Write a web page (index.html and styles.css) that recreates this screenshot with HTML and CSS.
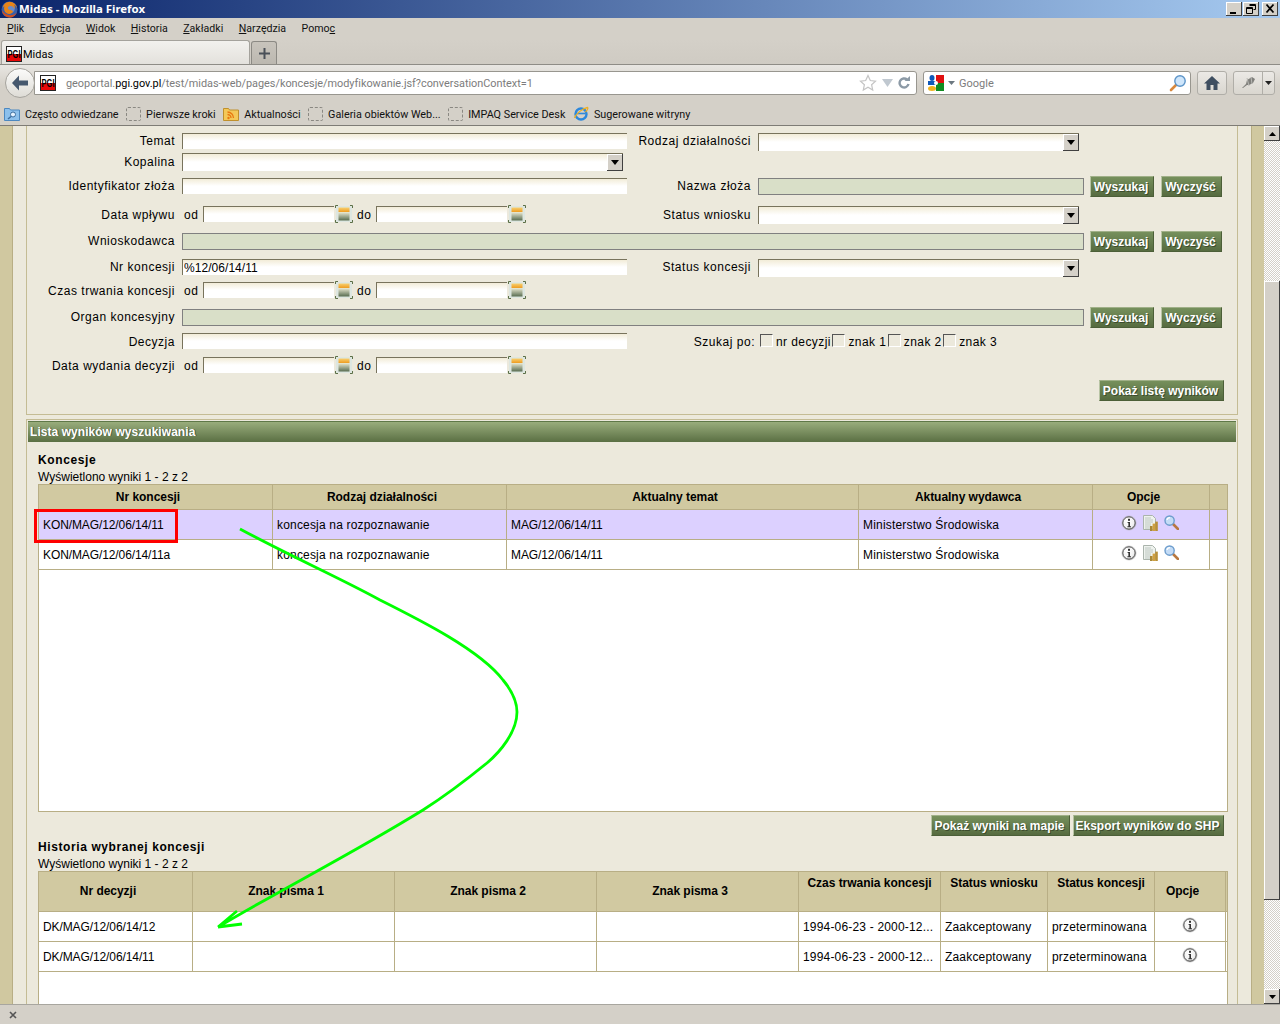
FILE: index.html
```html
<!DOCTYPE html>
<html lang="pl">
<head>
<meta charset="utf-8">
<title>Midas - Mozilla Firefox</title>
<link rel="stylesheet" href="styles.css">
</head>
<body>
<svg class="defs" aria-hidden="true">
  <defs>
    <linearGradient id="gCalTop" x1="0" y1="0" x2="0" y2="1"><stop offset="0" stop-color="#f8d070"/><stop offset="1" stop-color="#ee9c20"/></linearGradient>
    <linearGradient id="gCal" x1="0" y1="0" x2="0" y2="1"><stop offset="0" stop-color="#ecebd4"/><stop offset="1" stop-color="#586c50"/></linearGradient>
    <radialGradient id="gInfo" cx=".4" cy=".35" r=".75"><stop offset="0" stop-color="#fff"/><stop offset=".7" stop-color="#f0f0f0"/><stop offset="1" stop-color="#a8a8a8"/></radialGradient>
    <symbol id="i-info" viewBox="0 0 16 16">
      <circle cx="8" cy="8" r="7.6" fill="#b4b4b4" opacity=".55"/>
      <circle cx="8" cy="8" r="6.2" fill="url(#gInfo)" stroke="#4c4c4c" stroke-width="1"/>
      <rect x="7" y="3.8" width="2" height="2" fill="#333"/>
      <path d="M6.6 7h2.4v4.2h1v1H6.4v-1h1V8h-.8z" fill="#333"/>
    </symbol>
    <symbol id="i-report" viewBox="0 0 15 16">
      <path d="M.5.5h9l3 3v11H.5z" fill="#eef2ee" stroke="#aab4ac"/>
      <path d="M2.500 3h6M2.500 5h8M2.500 7h8M2.500 9h5M2.500 11h5M2.500 13h5" stroke="#8c9c94" stroke-dasharray="1 1"/>
      <rect x="7" y="11" width="2.600" height="5" fill="#a88838"/>
      <rect x="9.600" y="8.600" width="2.600" height="7.400" fill="#d0a040"/>
      <rect x="12.200" y="6.600" width="2.600" height="9.400" fill="#b89038"/>
    </symbol>
    <symbol id="i-mag" viewBox="0 0 15 15">
      <path d="M9 9l5 5" stroke="#b87840" stroke-width="2.600" stroke-linecap="round"/>
      <circle cx="5.600" cy="5.600" r="4.600" fill="#c4dcf6" stroke="#6c9ccc" stroke-width="1.400"/>
      <path d="M3 5a3 3 0 0 1 3-2.400" fill="none" stroke="#fff" stroke-width="1.200"/>
    </symbol>
    <symbol id="i-cal" viewBox="0 0 18 18">
      <rect x="1" y="1" width="16" height="16" rx="1" fill="#dde6e0"/>
      <rect x="3.500" y="7" width="11" height="8.500" fill="url(#gCal)"/>
      <rect x="3.500" y="2.500" width="11" height="4.500" fill="url(#gCalTop)"/>
      <path d="M.5 3V.5H3M15 .5h2.500V3M.5 15v2.500H3M15 17.500h2.500V15" fill="none" stroke="#5c7048"/>
    </symbol>
    <symbol id="i-pgi" viewBox="0 0 16 16">
      <rect x=".5" y=".5" width="15" height="15" fill="#fff" stroke="#222"/>
      <rect x="1" y="8" width="14" height="7" fill="#e80808"/>
      <text x="1.500" y="11.500" textLength="13" lengthAdjust="spacingAndGlyphs" class="pgi-text">PGI</text>
    </symbol>
  </defs>
</svg>

<div class="window">
  <header class="titlebar">
    <svg class="ff-icon" width="17" height="17" viewBox="0 0 16 16">
      <circle cx="8" cy="8" r="7.500" fill="#3a5fa8"/>
      <circle cx="8.500" cy="7" r="4.500" fill="#6c8cc8"/>
      <path d="M8 .6a7.400 7.400 0 0 1 7.300 6.600c-.6-1.600-1.600-2.800-3-3.400.8 1.200.8 2.400.4 3.600C12 5.600 10.600 4.400 8.400 4.800 6.800 5 6 6.400 6.800 7.600c1 1.400 3.600.6 4.600 2.200-.8 2.200-3.800 3-6 1.800C3 10.200 2.400 7.400 3.200 5 2.600 5.200 2 5.800 1.600 6.600 2 3.200 4.800.6 8 .6z" fill="#e88418"/>
      <path d="M.8 8.500c.4 4 3.400 7 7.200 7 3.200 0 6-2.200 7-5-1.600 2.400-4.800 3.300-7.800 2.700C4.600 12.600 2.200 10.800.8 8.500z" fill="#d4501c"/>
    </svg>
    <span class="title-text">Midas - Mozilla Firefox</span>
    <div class="win-btns">
      <span class="win-btn"><svg width="14" height="12" viewBox="0 0 14 12"><rect x="3" y="9" width="6" height="2" fill="#000"/></svg></span>
      <span class="win-btn"><svg width="14" height="12" viewBox="0 0 14 12"><path d="M5.500 1.500h6v5h-2M5.500 2.500h6M2.500 4.500h6v6h-6zM2.500 5.500h6" fill="none" stroke="#000"/></svg></span>
      <span class="win-btn win-close"><svg width="14" height="12" viewBox="0 0 14 12"><path d="M3.500 1.500l7 8M10.500 1.500l-7 8" stroke="#000" stroke-width="1.800"/></svg></span>
    </div>
  </header>

  <nav class="menubar">
    <span class="menu"><u>P</u>lik</span>
    <span class="menu"><u>E</u>dycja</span>
    <span class="menu"><u>W</u>idok</span>
    <span class="menu"><u>H</u>istoria</span>
    <span class="menu"><u>Z</u>akładki</span>
    <span class="menu"><u>N</u>arzędzia</span>
    <span class="menu">Pomo<u>c</u></span>
  </nav>

  <div class="tabbar">
    <div class="tab"><svg class="fav" width="16" height="16"><use href="#i-pgi"/></svg><span>Midas</span></div>
    <div class="newtab"><svg width="11" height="11" viewBox="0 0 11 11"><path d="M5.500 0v11M0 5.500h11" stroke="#4a5058" stroke-width="2"/></svg></div>
  </div>

  <div class="navbar">
    <div class="back"><svg width="20" height="18" viewBox="0 0 20 18"><path d="M9 1.500L2 9l7 7.500v-5h9v-5H9z" fill="#46586e"/></svg></div>
    <div class="urlbar">
      <svg class="fav" width="16" height="16"><use href="#i-pgi"/></svg>
      <span class="url"><span class="dim">geoportal.</span>pgi.gov.pl<span class="dim">/test/midas-web/pages/koncesje/modyfikowanie.jsf?conversationContext=1</span></span>
      <svg class="star" width="18" height="18" viewBox="0 0 18 18"><path d="M9 1.500l2.300 5 5.200.6-3.900 3.600 1.100 5.300L9 13.300 4.300 16l1.100-5.300L1.500 7.100l5.200-.6z" fill="#fff" stroke="#c4c4c4" stroke-width="1.200"/></svg>
      <svg class="drop" width="11" height="8" viewBox="0 0 11 8"><path d="M0 0h11L5.500 8z" fill="#c0c8d0"/></svg>
      <svg class="reload" width="12" height="13" viewBox="0 0 12 13"><path d="M10.500 8a4.500 4.500 0 1 1-1.500-4.500" fill="none" stroke="#8c9aa6" stroke-width="2.400"/><path d="M6.500 5h5.500V0z" fill="#8c9aa6"/></svg>
    </div>
    <div class="searchbar">
      <svg class="g-icon" width="16" height="16" viewBox="0 0 16 16">
        <rect x="8" width="8" height="8" fill="#e01010"/><rect x="8" y="8" width="8" height="8" fill="#108c20"/>
        <rect y="6" width="8" height="4" fill="#1058b8"/><ellipse cx="4" cy="3" rx="2.500" ry="3" fill="#1058b8"/><ellipse cx="4" cy="13.500" rx="4" ry="2.500" fill="#f0b420"/><circle cx="8" cy="8" r="2" fill="#fff"/>
      </svg>
      <svg class="g-drop" width="7" height="4" viewBox="0 0 7 4"><path d="M0 0h7L3.500 4z" fill="#6c7880"/></svg>
      <span class="search-text">Google</span>
      <svg class="search-go" width="18" height="18" viewBox="0 0 18 18"><path d="M8 10l-6 6" stroke="#d8883c" stroke-width="2.600" stroke-linecap="round"/><circle cx="11" cy="7" r="5.200" fill="#cfe6fb" stroke="#5c94c8" stroke-width="1.400"/></svg>
    </div>
    <div class="tool home"><svg width="16" height="14" viewBox="0 0 16 14"><path d="M8 0L0 7.500h2.500V14h4V9h3v5h4V7.500H16z" fill="#3e4e60"/></svg></div>
    <div class="tool addon">
      <span class="addon-main"><svg width="16" height="14" viewBox="0 0 16 14"><path d="M2 12l4-4 1-4 5-3 3 2-2 4-4 2-2 0-4 3z" fill="#80807c"/><path d="M7 2l2 8M11 1l1 7" stroke="#b8b8b4"/></svg></span>
      <span class="addon-arrow"><svg width="7" height="4" viewBox="0 0 7 4"><path d="M0 0h7L3.500 4z" fill="#222"/></svg></span>
    </div>
  </div>

  <div class="bookmarks">
    <span class="bm"><svg width="16" height="16" viewBox="0 0 16 16"><path d="M.5 2.500h5l1 1.500h9v10.500H.5z" fill="#8cc0ec" stroke="#4c88c0"/><circle cx="9" cy="8.500" r="2.500" fill="#e4f2ff" stroke="#3c6ea0"/><path d="M7 10.500l-3 2.500" stroke="#3c6ea0" stroke-width="1.500"/></svg>Często odwiedzane</span>
    <span class="bm"><span class="bm-empty"></span>Pierwsze kroki</span>
    <span class="bm"><svg width="16" height="16" viewBox="0 0 16 16"><path d="M.5 2.500h5l1 1.500h9v10.500H.5z" fill="#f4c858" stroke="#c0902c"/><circle cx="5.500" cy="12" r="1.200" fill="#e87810"/><path d="M4.500 8.500a3.500 3.500 0 0 1 3.500 3.500M4.500 6a6 6 0 0 1 6 6" fill="none" stroke="#e87810" stroke-width="1.300"/></svg>Aktualności</span>
    <span class="bm"><span class="bm-empty"></span>Galeria obiektów Web...</span>
    <span class="bm"><span class="bm-empty"></span>IMPAQ Service Desk</span>
    <span class="bm"><svg width="16" height="16" viewBox="0 0 16 16"><circle cx="8" cy="8" r="5.500" fill="none" stroke="#2c88dc" stroke-width="2.400"/><path d="M3.500 7.500h9" stroke="#2c88dc" stroke-width="1.600"/><path d="M1.500 12C3 8 9 2.500 14.500 1.500c1 1-.5 3-2 4.500" fill="none" stroke="#f0b020" stroke-width="1.300"/></svg>Sugerowane witryny</span>
  </div>

  <main class="viewport">
    <div class="edge"></div>
    <div class="page">
      <section class="filters">
        <label class="lbl">Temat</label>
        <input class="field" type="text">
        <label class="lbl">Rodzaj działalności</label>
        <div class="select sel-right"><span class="sel-arrow"></span></div>
        <span></span>

        <label class="lbl low">Kopalina</label>
        <div class="select sel-wide"><span class="sel-arrow"></span></div>
        <span class="span3"></span>

        <label class="lbl">Identyfikator złoża</label>
        <input class="field" type="text">
        <label class="lbl">Nazwa złoża</label>
        <input class="field-ro" type="text" readonly>
        <div class="actions"><button class="btn btn-s">Wyszukaj</button><button class="btn btn-c">Wyczyść</button></div>

        <label class="lbl low">Data wpływu</label>
        <div class="range">
          <span class="od low">od</span><input class="field date" type="text"><svg class="cal" width="18" height="18"><use href="#i-cal"/></svg>
          <span class="do low">do</span><input class="field date" type="text"><svg class="cal" width="18" height="18"><use href="#i-cal"/></svg>
        </div>
        <label class="lbl low">Status wniosku</label>
        <div class="select sel-right"><span class="sel-arrow"></span></div>
        <span></span>

        <label class="lbl">Wnioskodawca</label>
        <input class="field-ro wide" type="text" readonly>
        <div class="actions"><button class="btn btn-s">Wyszukaj</button><button class="btn btn-c">Wyczyść</button></div>

        <label class="lbl">Nr koncesji</label>
        <input class="field" type="text" value="%12/06/14/11">
        <label class="lbl">Status koncesji</label>
        <div class="select sel-right"><span class="sel-arrow"></span></div>
        <span></span>

        <label class="lbl low">Czas trwania koncesji</label>
        <div class="range">
          <span class="od low">od</span><input class="field date" type="text"><svg class="cal" width="18" height="18"><use href="#i-cal"/></svg>
          <span class="do low">do</span><input class="field date" type="text"><svg class="cal" width="18" height="18"><use href="#i-cal"/></svg>
        </div>
        <span class="span3"></span>

        <label class="lbl">Organ koncesyjny</label>
        <input class="field-ro wide" type="text" readonly>
        <div class="actions"><button class="btn btn-s">Wyszukaj</button><button class="btn btn-c">Wyczyść</button></div>

        <label class="lbl low">Decyzja</label>
        <input class="field" type="text">
        <label class="lbl lbl-near low">Szukaj po:</label>
        <div class="checks">
          <span class="chk"></span><span class="chk-t low">nr decyzji</span>
          <span class="chk"></span><span class="chk-t low">znak 1</span>
          <span class="chk"></span><span class="chk-t low">znak 2</span>
          <span class="chk"></span><span class="chk-t low">znak 3</span>
        </div>
        <span></span>

        <label class="lbl low">Data wydania decyzji</label>
        <div class="range">
          <span class="od low">od</span><input class="field date" type="text"><svg class="cal" width="18" height="18"><use href="#i-cal"/></svg>
          <span class="do low">do</span><input class="field date" type="text"><svg class="cal" width="18" height="18"><use href="#i-cal"/></svg>
        </div>
        <span class="span3"></span>

        <div class="show-row"><button class="btn btn-list">Pokaż listę wyników</button></div>
      </section>

      <section class="results">
        <h2 class="bar">Lista wyników wyszukiwania</h2>
        <div class="results-body">
          <h3 class="sub-title">Koncesje</h3>
          <p class="sub-info">Wyświetlono wyniki 1 - 2 z 2</p>
          <div class="table-box box-main">
            <table class="grid">
              <colgroup><col class="c234"><col class="c234"><col class="c352"><col class="c234"><col class="c117"><col></colgroup>
              <thead><tr class="h-main"><th>Nr koncesji</th><th>Rodzaj działalności</th><th>Aktualny temat</th><th>Aktualny wydawca</th><th>Opcje</th><th></th></tr></thead>
              <tbody>
                <tr class="sel">
                  <td class="code">KON/MAG/12/06/14/11</td><td>koncesja na rozpoznawanie</td><td class="code">MAG/12/06/14/11</td><td>Ministerstwo Środowiska</td>
                  <td><div class="opts"><svg width="16" height="16"><use href="#i-info"/></svg><svg width="15" height="16"><use href="#i-report"/></svg><svg width="15" height="15"><use href="#i-mag"/></svg></div></td><td></td>
                </tr>
                <tr>
                  <td class="code">KON/MAG/12/06/14/11a</td><td>koncesja na rozpoznawanie</td><td class="code">MAG/12/06/14/11</td><td>Ministerstwo Środowiska</td>
                  <td><div class="opts"><svg width="16" height="16"><use href="#i-info"/></svg><svg width="15" height="16"><use href="#i-report"/></svg><svg width="15" height="15"><use href="#i-mag"/></svg></div></td><td></td>
                </tr>
              </tbody>
            </table>
          </div>
          <div class="export-row"><button class="btn btn-map">Pokaż wyniki na mapie</button><button class="btn btn-shp">Eksport wyników do SHP</button></div>
          <h3 class="sub-title title-hist">Historia wybranej koncesji</h3>
          <p class="sub-info">Wyświetlono wyniki 1 - 2 z 2</p>
          <div class="table-box box-hist">
            <table class="grid">
              <colgroup><col class="c154"><col class="c202"><col class="c202"><col class="c202"><col class="c142"><col class="c107"><col class="c107"><col class="c71"><col></colgroup>
              <thead><tr class="h-hist"><th>Nr decyzji</th><th>Znak pisma 1</th><th>Znak pisma 2</th><th>Znak pisma 3</th><th class="top">Czas trwania koncesji</th><th class="top">Status wniosku</th><th class="top">Status koncesji</th><th>Opcje</th><th></th></tr></thead>
              <tbody>
                <tr><td class="code">DK/MAG/12/06/14/12</td><td></td><td></td><td></td><td>1994-06-23 - 2000-12...</td><td>Zaakceptowany</td><td>przeterminowana</td><td class="ctr"><svg class="info-h" width="16" height="16"><use href="#i-info"/></svg></td><td></td></tr>
                <tr><td class="code">DK/MAG/12/06/14/11</td><td></td><td></td><td></td><td>1994-06-23 - 2000-12...</td><td>Zaakceptowany</td><td>przeterminowana</td><td class="ctr"><svg class="info-h" width="16" height="16"><use href="#i-info"/></svg></td><td></td></tr>
              </tbody>
            </table>
          </div>
        </div>
      </section>
    </div>
    <div class="edge-r"></div>
    <div class="scrollbar">
      <span class="sb-btn"><svg width="7" height="4" viewBox="0 0 7 4"><path d="M3.500 0L7 4H0z"/></svg></span>
      <span class="sb-track sb-upper"></span>
      <span class="sb-thumb"></span>
      <span class="sb-track sb-lower"></span>
      <span class="sb-btn"><svg width="7" height="4" viewBox="0 0 7 4"><path d="M0 0h7L3.500 4z"/></svg></span>
    </div>
  </main>

  <footer class="statusbar"><svg width="8" height="8" viewBox="0 0 8 8"><path d="M1 1l6 6M7 1l-6 6" stroke="#555" stroke-width="1.600"/></svg></footer>
</div>

<div class="redbox"></div>
<svg class="annot" width="1280" height="1024" viewBox="0 0 1280 1024">
  <path d="M240 529C290 556 340 578 380 600C420 620 480 650 503 680C513 692 517 702 517 712C517 732 500 752 487 763C465 781 445 796 423 810C350 855 280 890 218 927M218 927L237 911M218 927L242 924" fill="none" stroke="#00ff00" stroke-width="2.800"/>
</svg>
</body>
</html>
```
FILE: styles.css
```css
* { box-sizing: border-box; }
html, body { margin: 0; padding: 0; width: 1280px; height: 1024px; overflow: hidden; }
body { position: relative; font-family: "Liberation Sans", Arial, sans-serif; font-size: 12px; color: #000; background: #d4d0c8; }
.defs { position: absolute; width: 0; height: 0; }
.pgi-text { font: bold 10px "Liberation Sans", sans-serif; fill: #000; }
svg { display: block; flex: none; }

.window { width: 1280px; height: 1024px; display: flex; flex-direction: column; }

.titlebar { height: 18px; flex: none; display: flex; align-items: center; padding: 0 2px 0 1px; background: linear-gradient(90deg, #0a246a 0%, #a6caf0 100%); }
.ff-icon { margin-right: 1px; }
.title-text { color: #fff; font: bold 11.4px "Noto Sans", Tahoma, sans-serif; padding-bottom: 2px; }
.win-btns { margin-left: auto; display: flex; gap: 1px; }
.win-btn { width: 16px; height: 14px; display: flex; align-items: center; justify-content: center; background: #d4d0c8; box-shadow: inset -1px -1px #404040, inset 1px 1px #fff; }
.win-close { margin-left: 2px; }

.menubar { height: 22px; flex: none; display: flex; align-items: center; gap: 15.5px; padding: 0 0 1px 7px; font: 10.6px Roboto, Tahoma, sans-serif; color: #111; background: #d4d0c8; }

.tabbar { height: 24px; flex: none; display: flex; align-items: flex-end; padding-left: 1px; gap: 2px; background: linear-gradient(#d4d0c8, #cfcbc3); font: 11px Roboto, Tahoma, sans-serif; }
.tab { width: 249px; height: 24px; display: flex; align-items: center; gap: 1px; padding: 3px 0 0 4px; border: 1px solid #a4a29c; border-bottom: 0; border-radius: 3px 3px 0 0; background: linear-gradient(#f2f1ee, #e3e1dc); }
.tab .fav { margin-top: -1px; }
.newtab { width: 26px; height: 23px; margin-left: -1px; display: flex; align-items: center; justify-content: center; border: 1px solid #8c8a84; border-bottom: 0; border-radius: 3px 3px 0 0; background: linear-gradient(#c8c4bc, #bcb8b0); }

.navbar { height: 36px; flex: none; display: flex; align-items: center; padding: 0 5px 0 5px; border-top: 1px solid #8e8c86; background: linear-gradient(#e8e6e2, #d4d0c8 60%); font: 11px Roboto, Tahoma, sans-serif; }
.back { width: 30px; height: 30px; display: flex; align-items: center; justify-content: center; border-radius: 50%; background: linear-gradient(#fbfbfa, #dedcd6); border: 1px solid #a6a49e; z-index: 1; }
.urlbar { width: 883px; height: 24px; margin-left: -1px; display: flex; align-items: center; padding-left: 5px; background: #fff; border: 1px solid #98968f; border-radius: 0 3px 3px 0; }
.url { margin-left: 10px; padding-top: 2px; color: #000; flex: 1; white-space: nowrap; letter-spacing: -.02px; font-size: 10.9px; }
.dim { color: #7c7c7c; }
.star { margin-right: 5px; }
.drop { margin-right: 5px; }
.reload { margin-right: 6px; }
.searchbar { width: 268px; height: 24px; margin-left: 6px; display: flex; align-items: center; padding: 0 3px 0 4px; background: #fff; border: 1px solid #98968f; border-radius: 3px; }
.g-drop { margin-left: 4px; }
.search-text { margin-left: 4px; padding-top: 2px; color: #7c7c7c; flex: 1; }
.tool { height: 24px; display: flex; align-items: center; justify-content: center; border: 1px solid #b0aea8; border-radius: 3px; background: linear-gradient(#ebe9e5, #d9d6cf); }
.home { width: 30px; margin-left: 6px; }
.addon { width: 42px; margin-left: 6px; }
.addon-main { width: 28px; display: flex; justify-content: center; }
.addon-arrow { flex: 1; height: 100%; border-left: 1px solid #b0aea8; display: flex; align-items: center; justify-content: center; }

.bookmarks { height: 26px; flex: none; display: flex; align-items: center; gap: 7.5px; padding: 3px 0 0 4px; background: #d4d0c8; border-bottom: 1px solid #7e7c76; font: 10.8px Roboto, Tahoma, sans-serif; color: #111; }
.bm { display: flex; align-items: center; gap: 5px; white-space: nowrap; }
.bm-empty { width: 15px; height: 14px; border: 1px dashed #8a8882; border-radius: 2px; }

.viewport { flex: 1; min-height: 0; display: flex; overflow: hidden; background: #ece9dc; }
.edge { width: 13px; flex: none; background: #d0c8a0; border-right: 1px solid #b8ae85; }
.page { width: 1238px; flex: none; padding: 0 13px; background: #ece9dc; overflow: hidden; letter-spacing: .52px; }
.edge-r { width: 13px; flex: none; background: #d0c8a0; border-left: 1px solid #b8ae85; }

.filters { height: 289px; display: grid; grid-template-columns: 155px 445px 131px 326px 1fr; grid-template-rows: 20px 25px 28px 27px 26px 23px 27px 24px 24px 23px 34px; align-items: start; padding-top: 7px; border: 1px solid #c4bc94; border-width: 0 1px 1px 1px; }
.lbl { height: 16px; display: flex; align-items: center; justify-content: flex-end; padding-right: 7px; white-space: nowrap; }
.lbl-near { padding-right: 3px; }
.low { position: relative; top: 1px; }
.span3 { grid-column: span 3; }
.field { height: 16px; width: 445px; margin: 0; padding: 0 0 0 1px; border: 0; border-top: 1px solid #78735c; border-left: 1px solid #78735c; border-radius: 0; outline: 0; font: inherit; letter-spacing: .05px; background: linear-gradient(#f2ecd8, #fff 7px); }
.field-ro { height: 17px; width: 326px; margin: 0; padding: 0; border: 1px solid #808080; border-radius: 0; outline: 0; background: #d9dfc8; }
.wide { grid-column: span 3; width: 902px; }
.select { height: 18px; position: relative; border-top: 1px solid #78735c; border-left: 1px solid #78735c; background: linear-gradient(#f2ecd8, #fff 8px); }
.sel-right { width: 321px; }
.sel-wide { width: 441px; }
.sel-arrow { position: absolute; right: 0; top: 0; width: 16px; height: 17px; background: #d4d0c8; box-shadow: inset -1px -1px #404040, inset 1px 1px #fff; }
.sel-arrow::after { content: ""; position: absolute; left: 4px; top: 6px; border: 4px solid transparent; border-top: 5px solid #000; border-bottom: 0; }
.actions { display: flex; gap: 7px; padding-left: 6px; margin-top: -2px; }
.btn { height: 21px; padding: 0 2px 0 0; border: 1px solid #4c5f38; border-top-color: #a0b088; border-left-color: #b8c4a4; border-radius: 0; color: #fff; font: bold 12px "Liberation Sans", Arial, sans-serif; letter-spacing: 0; background: linear-gradient(#76905c, #566b40); text-shadow: 1px 1px 0 #3c4c2c; white-space: nowrap; }
.btn-s { width: 64px; }
.btn-c { width: 61px; }
.btn-list { width: 125px; }
.btn-map { width: 139px; }
.btn-shp { width: 151px; }
.range { grid-column: 2; display: flex; align-items: flex-start; padding-left: 2px; }
.od { width: 19px; height: 16px; line-height: 16px; }
.do { width: 23px; height: 16px; line-height: 16px; padding-left: 4px; }
.date { width: 131px; }
.cal { margin-left: 1px; margin-top: -1px; }
.checks { display: flex; align-items: flex-start; padding-left: 2px; height: 16px; grid-column: span 1; white-space: nowrap; }
.chk { width: 13px; height: 13px; margin-top: 1px; flex: none; border: 1px solid #555; border-right-color: #fff; border-bottom-color: #fff; background: #ece9dc; }
.chk-t { line-height: 16px; padding: 0 1.500px 0 3px; letter-spacing: .42px; }
.show-row { grid-column: 1 / -1; display: flex; justify-content: flex-end; padding-right: 13px; }

.results { margin-top: 4px; height: 600px; padding: 1px; border: 1px solid #c4bc94; }
.bar { margin: 0; height: 21px; display: flex; align-items: center; padding-left: 2px; color: #fff; font-size: 12px; font-weight: bold; letter-spacing: .05px; border-top: 1px solid #5f7848; background: linear-gradient(#99ad7c, #5a6f43); text-shadow: 1px 0 0 #46583a; }
.results-body { padding: 11px 8px 0 10px; }
.sub-title { margin: 0; height: 15px; line-height: 15px; font-size: 12px; font-weight: bold; letter-spacing: .6px; }
.title-hist { margin-top: 4px; }
.sub-info { margin: 0; height: 16px; line-height: 18px; letter-spacing: 0; }
.table-box { background: #fff; border: 1px solid #b8ae85; }
.box-main { height: 328px; }
.box-hist { height: 160px; }
.grid { width: 1188px; table-layout: fixed; border-collapse: separate; border-spacing: 0; }
.grid th { padding: 0 15px 0 0; background: #d1c9a1; border-right: 1px solid #b8ae85; border-bottom: 1px solid #b8ae85; font-size: 12px; font-weight: bold; text-align: center; letter-spacing: -.03px; overflow: hidden; }
.grid td { height: 30px; padding: 0 0 0 4px; border-right: 1px solid #b8ae85; border-bottom: 1px solid #b8ae85; white-space: nowrap; overflow: hidden; letter-spacing: .18px; }
.grid td.code { letter-spacing: -.1px; }
.grid th:last-child, .grid td:last-child { border-right: 0; }
.h-main th { height: 25px; }
.h-hist th { height: 40px; padding-bottom: 2px; }
.h-hist th.top { vertical-align: top; padding: 4px 0 0; }
.sel td { background: #dcd0ff; }
.c234 { width: 234px; }
.c352 { width: 352px; }
.c117 { width: 117px; }
.c154 { width: 154px; }
.c202 { width: 202px; }
.c142 { width: 142px; }
.c107 { width: 107px; }
.c71 { width: 71px; }
.opts { display: flex; align-items: flex-start; gap: 6px; padding-left: 24px; margin-top: -3px; }
.grid td.ctr { padding: 0; }
.info-h { margin: -3px 0 0 27px; }
.export-row { display: flex; justify-content: flex-end; gap: 3px; padding-right: 4px; margin-top: 3px; }

.scrollbar { width: 16px; flex: none; display: flex; flex-direction: column; }
.sb-btn { height: 15px; flex: none; display: flex; align-items: center; justify-content: center; background: #d4d0c8; box-shadow: inset -1px -1px #404040, inset 1px 1px #fff; }
.sb-track { flex: none; background: repeating-conic-gradient(#fff 0 25%, #d4d0c8 0 50%) 0 0 / 2px 2px; }
.sb-upper { height: 140px; }
.sb-lower { flex: 1; }
.sb-thumb { height: 619px; flex: none; background: #d4d0c8; box-shadow: inset -1px -1px #404040, inset 1px 1px #fff; }

.statusbar { height: 20px; flex: none; display: flex; align-items: center; padding-left: 9px; border-top: 1px solid #a8a69f; background: #d4d0c8; }

.redbox { position: absolute; left: 34px; top: 509px; width: 144px; height: 34px; border: 3px solid #f00; }
.annot { position: absolute; left: 0; top: 0; pointer-events: none; }
```
